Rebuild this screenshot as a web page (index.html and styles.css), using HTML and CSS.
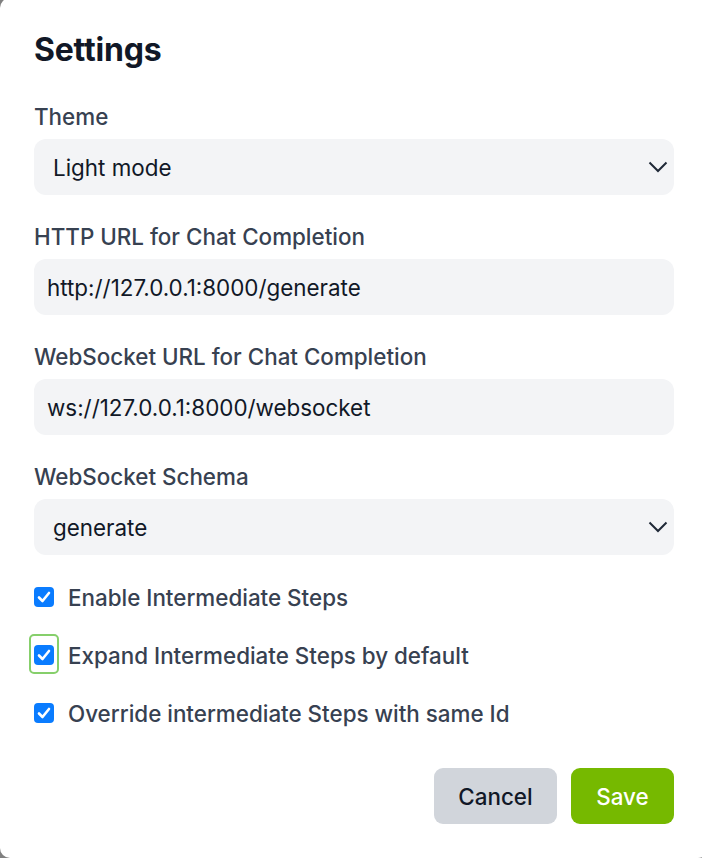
FILE: index.html
```html
<!DOCTYPE html>
<html>
<head>
<meta charset="utf-8">
<link rel="stylesheet" href="styles.css">
</head>
<body>
<div class="modal">
  <h1 class="title">Settings</h1>

  <div class="field">
    <div class="label">Theme</div>
    <div class="control select">
      <span>Light mode</span>
      <svg class="chev" width="20" height="12" viewBox="0 0 20 12"><polyline points="1.5,1.5 10,10 18.5,1.5" fill="none" stroke="#1f2937" stroke-width="2"/></svg>
    </div>
  </div>

  <div class="field">
    <div class="label">HTTP URL for Chat Completion</div>
    <div class="control input">http://127.0.0.1:8000/generate</div>
  </div>

  <div class="field">
    <div class="label">WebSocket URL for Chat Completion</div>
    <div class="control input">ws://127.0.0.1:8000/websocket</div>
  </div>

  <div class="field">
    <div class="label">WebSocket Schema</div>
    <div class="control select">
      <span>generate</span>
      <svg class="chev" width="20" height="12" viewBox="0 0 20 12"><polyline points="1.5,1.5 10,10 18.5,1.5" fill="none" stroke="#1f2937" stroke-width="2"/></svg>
    </div>
  </div>

  <div class="checks">
    <div class="check">
      <span class="box"><svg width="14" height="12" viewBox="0 0 14 12"><polyline points="2,6.5 5.5,10 12,2" fill="none" stroke="#fff" stroke-width="2.6" stroke-linecap="round" stroke-linejoin="round"/></svg></span>
      <span>Enable Intermediate Steps</span>
    </div>
    <div class="check">
      <span class="box focus"><svg width="14" height="12" viewBox="0 0 14 12"><polyline points="2,6.5 5.5,10 12,2" fill="none" stroke="#fff" stroke-width="2.6" stroke-linecap="round" stroke-linejoin="round"/></svg></span>
      <span>Expand Intermediate Steps by default</span>
    </div>
    <div class="check">
      <span class="box"><svg width="14" height="12" viewBox="0 0 14 12"><polyline points="2,6.5 5.5,10 12,2" fill="none" stroke="#fff" stroke-width="2.6" stroke-linecap="round" stroke-linejoin="round"/></svg></span>
      <span>Override intermediate Steps with same Id</span>
    </div>
  </div>

  <div class="actions">
    <button class="btn cancel">Cancel</button>
    <button class="btn save">Save</button>
  </div>
</div>
</body>
</html>
```

FILE: styles.css
```css
html, body {
  margin: 0;
  padding: 0;
  height: 858px;
  overflow: hidden;
  background: #808080;
  font-family: "Inter", "Liberation Sans", sans-serif;
}

.modal {
  box-sizing: border-box;
  width: 708px;
  height: 860px;
  margin-top: -2px;
  background: #ffffff;
  border-radius: 10px;
  padding: 32px 34px 0 34px;
  display: flex;
  flex-direction: column;
}

.title {
  margin: 0 0 31px 0;
  font-size: 32px;
  line-height: 40px;
  font-weight: 700;
  color: #111827;
  letter-spacing: -0.2px;
}

.field {
  display: flex;
  flex-direction: column;
  gap: 6px;
  margin-bottom: 26px;
}

.label {
  font-size: 22.4px;
  line-height: 32px;
  font-weight: 500;
  color: #374151;
}

.control {
  box-sizing: border-box;
  height: 56px;
  background: #f3f4f6;
  border-radius: 12px;
  display: flex;
  align-items: center;
  font-size: 22.4px;
  color: #111827;
}

.input {
  padding-left: 13px;
}

.select {
  padding-left: 19px;
  padding-right: 6px;
  justify-content: space-between;
}

.chev {
  display: block;
}

.checks {
  display: flex;
  flex-direction: column;
  gap: 26px;
  margin-top: 0;
}

.check {
  display: flex;
  align-items: center;
  gap: 14px;
  height: 32px;
  font-size: 22.4px;
  font-weight: 500;
  color: #374151;
}

.box {
  position: relative;
  width: 20px;
  height: 20px;
  border-radius: 4px;
  background: #0a7cff;
  display: flex;
  align-items: center;
  justify-content: center;
  flex: none;
}

.box.focus::after {
  content: "";
  position: absolute;
  left: -5px;
  width: 26px;
  height: 36px;
  border: 2px solid #86cf6b;
  border-radius: 5px;
  top: -11px;
}

.actions {
  display: flex;
  justify-content: flex-end;
  gap: 14px;
  margin-top: 39px;
}

.btn {
  height: 56px;
  border: none;
  border-radius: 9px;
  font-family: inherit;
  font-size: 22.4px;
  font-weight: 500;
  padding: 0;
}

.cancel {
  background: #d1d5db;
  color: #111827;
  width: 123px;
}

.save {
  background: #76b900;
  color: #ffffff;
  width: 103px;
}
```
